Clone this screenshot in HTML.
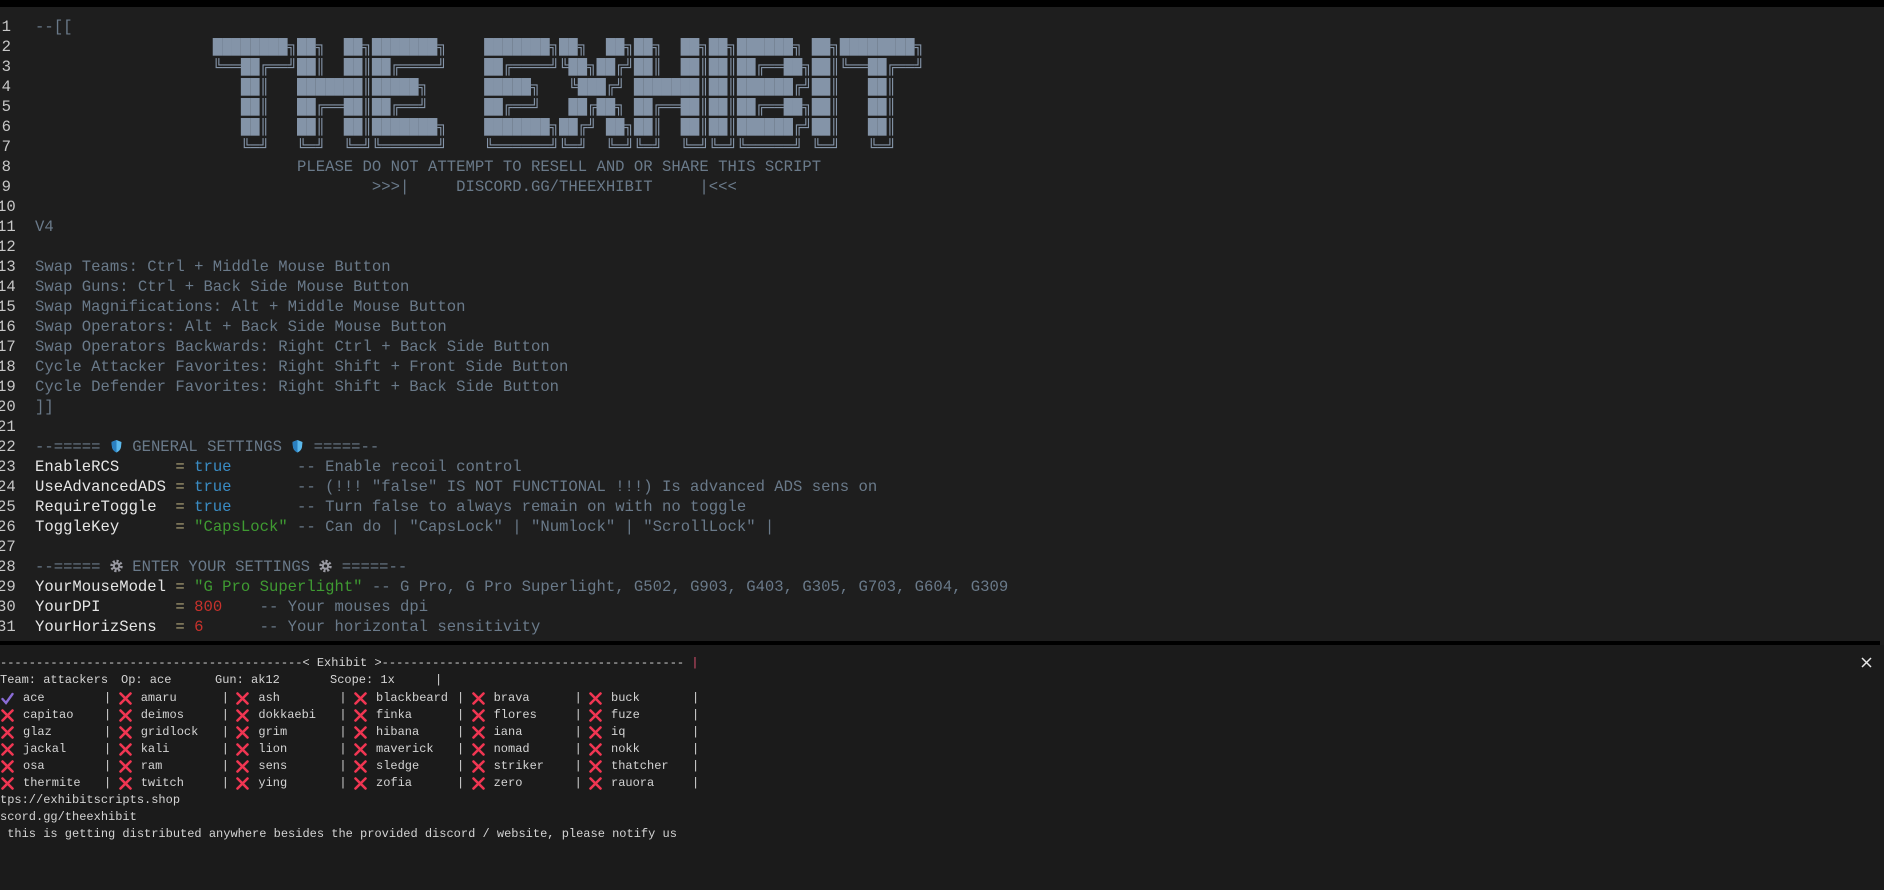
<!DOCTYPE html>
<html><head><meta charset="utf-8"><style>
html,body{margin:0;padding:0;width:1884px;height:890px;overflow:hidden;background:#1e1e1e;}
.top{position:absolute;left:0;top:0;width:1884px;height:7px;background:#000;}
.ed{position:absolute;left:0;top:7px;width:1884px;height:634px;overflow:hidden;}
.ln{position:absolute;left:-3px;width:14px;text-align:right;font:15.6px/20px "Liberation Mono",monospace;color:#c8c8c8;white-space:pre;}
.tx{position:absolute;left:35px;font:15.6px/20px "Liberation Mono","DejaVu Sans Mono",monospace;color:#6a7a8a;white-space:pre;}
.art{color:#8494a8;}
.w{color:#e6e6e6;}.eq{color:#b0a47a;}.b{color:#3a8cc4;}.g{color:#3f9b32;}.r{color:#c8322c;}
.div{position:absolute;left:0;top:641px;width:1880px;height:4px;background:#000;}
.term{position:absolute;left:0;top:645px;width:1884px;height:245px;background:#1b1b1b;}
.t{position:absolute;font:12px/17px "Liberation Mono","DejaVu Sans Mono",monospace;color:#d4d4d4;white-space:pre;}
.ic{display:inline-block;width:13px;height:14px;vertical-align:-2px;}
</style></head><body>
<div class="top"></div>
<div class="ed">
<div class="ln" style="top:10px">1
2
3
4
5
6
7
8
9
10
11
12
13
14
15
16
17
18
19
20
21
22
23
24
25
26
27
28
29
30
31</div>
<div class="tx" style="top:10px">--[[
<span class="art">                   ████████╗██╗  ██╗███████╗    ███████╗██╗  ██╗██╗  ██╗██╗██████╗ ██╗████████╗
                   ╚══██╔══╝██║  ██║██╔════╝    ██╔════╝╚██╗██╔╝██║  ██║██║██╔══██╗██║╚══██╔══╝
                      ██║   ███████║█████╗      █████╗   ╚███╔╝ ███████║██║██████╔╝██║   ██║
                      ██║   ██╔══██║██╔══╝      ██╔══╝   ██╔██╗ ██╔══██║██║██╔══██╗██║   ██║
                      ██║   ██║  ██║███████╗    ███████╗██╔╝ ██╗██║  ██║██║██████╔╝██║   ██║
                      ╚═╝   ╚═╝  ╚═╝╚══════╝    ╚══════╝╚═╝  ╚═╝╚═╝  ╚═╝╚═╝╚═════╝ ╚═╝   ╚═╝</span>
                            PLEASE DO NOT ATTEMPT TO RESELL AND OR SHARE THIS SCRIPT
                                    >>>|     DISCORD.GG/THEEXHIBIT     |<<<

V4

Swap Teams: Ctrl + Middle Mouse Button
Swap Guns: Ctrl + Back Side Mouse Button
Swap Magnifications: Alt + Middle Mouse Button
Swap Operators: Alt + Back Side Mouse Button
Swap Operators Backwards: Right Ctrl + Back Side Button
Cycle Attacker Favorites: Right Shift + Front Side Button
Cycle Defender Favorites: Right Shift + Back Side Button
]]

--===== <svg class="ic" viewBox="0 0 13 14"><path d="M6.5 1 L11.5 3 L11 8 C10.5 11 8.5 12.5 6.5 13.5 C4.5 12.5 2.5 11 2 8 L1.5 3 Z" fill="#5bb8ec"/><path d="M6.5 1 L6.5 13.5 C4.5 12.5 2.5 11 2 8 L1.5 3 Z" fill="#2a7fc0"/></svg> GENERAL SETTINGS <svg class="ic" viewBox="0 0 13 14"><path d="M6.5 1 L11.5 3 L11 8 C10.5 11 8.5 12.5 6.5 13.5 C4.5 12.5 2.5 11 2 8 L1.5 3 Z" fill="#5bb8ec"/><path d="M6.5 1 L6.5 13.5 C4.5 12.5 2.5 11 2 8 L1.5 3 Z" fill="#2a7fc0"/></svg> =====--
<span class="w">EnableRCS</span>      <span class="eq">=</span> <span class="b">true</span>       -- Enable recoil control
<span class="w">UseAdvancedADS</span> <span class="eq">=</span> <span class="b">true</span>       -- (!!! "false" IS NOT FUNCTIONAL !!!) Is advanced ADS sens on
<span class="w">RequireToggle</span>  <span class="eq">=</span> <span class="b">true</span>       -- Turn false to always remain on with no toggle
<span class="w">ToggleKey</span>      <span class="eq">=</span> <span class="g">"CapsLock"</span> -- Can do | "CapsLock" | "Numlock" | "ScrollLock" |

--===== <svg class="ic" viewBox="0 0 14 14"><circle cx="7" cy="7" r="5" fill="none" stroke="#9a9aa2" stroke-width="3.4" stroke-dasharray="2.2 1.7"/><circle cx="7" cy="7" r="4" fill="#9a9aa2"/><circle cx="7" cy="7" r="1.8" fill="#1e1e1e"/></svg> ENTER YOUR SETTINGS <svg class="ic" viewBox="0 0 14 14"><circle cx="7" cy="7" r="5" fill="none" stroke="#9a9aa2" stroke-width="3.4" stroke-dasharray="2.2 1.7"/><circle cx="7" cy="7" r="4" fill="#9a9aa2"/><circle cx="7" cy="7" r="1.8" fill="#1e1e1e"/></svg> =====--
<span class="w">YourMouseModel</span> <span class="eq">=</span> <span class="g">"G Pro Superlight"</span> -- G Pro, G Pro Superlight, G502, G903, G403, G305, G703, G604, G309
<span class="w">YourDPI</span>        <span class="eq">=</span> <span class="r">800</span>    -- Your mouses dpi
<span class="w">YourHorizSens</span>  <span class="eq">=</span> <span class="r">6</span>      -- Your horizontal sensitivity</div>
</div>
<div class="div"></div>
<div class="term">
<svg style="position:absolute;left:1861px;top:12px" width="11" height="11" viewBox="0 0 11 11"><path d="M1 1L10 10M10 1L1 10" stroke="#e8e8e8" stroke-width="1.5"/></svg>
<div class="t" style="left:0;top:10px">------------------------------------------< Exhibit >------------------------------------------ <span style="color:#e05070">|</span></div>
<div class="t" style="left:0;top:27px">Team: attackers</div>
<div class="t" style="left:121px;top:27px">Op: ace</div>
<div class="t" style="left:215px;top:27px">Gun: ak12</div>
<div class="t" style="left:330px;top:27px">Scope: 1x</div>
<div class="t" style="left:435px;top:27px">|</div>
</div>
<div id="grid"></div>
<script>
var names=[["ace","amaru","ash","blackbeard","brava","buck"],["capitao","deimos","dokkaebi","finka","flores","fuze"],["glaz","gridlock","grim","hibana","iana","iq"],["jackal","kali","lion","maverick","nomad","nokk"],["osa","ram","sens","sledge","striker","thatcher"],["thermite","twitch","ying","zofia","zero","rauora"]];
var cols=[0,117.7,235.4,353,470.6,588],h='';
var X='<svg width="13" height="13" viewBox="0 0 13 13"><path d="M1.5 1.5L11.5 11.5M11.5 1.5L1.5 11.5" stroke="#f03652" stroke-width="2.6" stroke-linecap="round"/></svg>';
var C='<svg width="13" height="13" viewBox="0 0 13 13"><path d="M1.5 7L5 11L11.5 2" fill="none" stroke="#8a6cd6" stroke-width="2.4" stroke-linecap="round"/></svg>';
for(var r=0;r<6;r++){var y=690+r*17;for(var c=0;c<6;c++){var x=cols[c];var ic=(r==0&&c==0)?C:X;
h+='<div style="position:absolute;left:'+(x+1)+'px;top:'+(y+2)+'px;line-height:0">'+ic+'</div><div class="t" style="left:'+(x+23)+'px;top:'+y+'px">'+names[r][c]+'</div><div class="t" style="left:'+(x+104)+'px;top:'+y+'px">|</div>';}}
h+='<div class="t" style="left:0;top:792px">tps://exhibitscripts.shop</div><div class="t" style="left:0;top:809px">scord.gg/theexhibit</div><div class="t" style="left:0;top:826px"> this is getting distributed anywhere besides the provided discord / website, please notify us</div>';
document.getElementById('grid').innerHTML=h;
</script>
</body></html>
